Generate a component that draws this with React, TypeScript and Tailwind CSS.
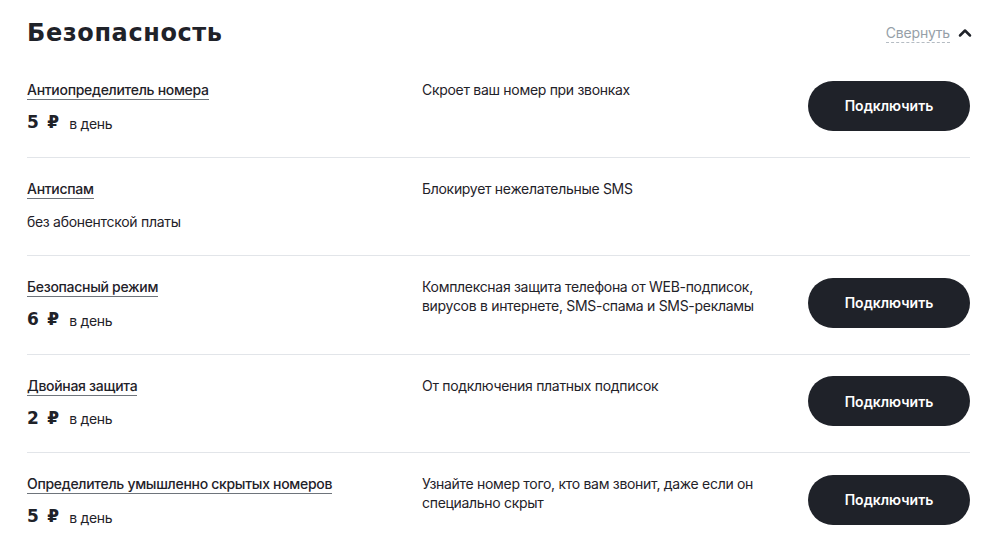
import { ChevronUp } from 'lucide-react'

const items = [
  { name: 'Антиопределитель номера', price: '5', desc: ['Скроет ваш номер при звонках'], button: true },
  { name: 'Антиспам', price: null, desc: ['Блокирует нежелательные SMS'], button: false },
  {
    name: 'Безопасный режим',
    price: '6',
    desc: ['Комплексная защита телефона от WEB-подписок,', 'вирусов в интернете, SMS-спама и SMS-рекламы'],
    button: true
  },
  { name: 'Двойная защита', price: '2', desc: ['От подключения платных подписок'], button: true },
  {
    name: 'Определитель умышленно скрытых номеров',
    price: '5',
    desc: ['Узнайте номер того, кто вам звонит, даже если он', 'специально скрыт'],
    button: true
  }
]

export default function App() {
  return (
    <div className="min-h-screen bg-white text-[#1f2229]" style={{ fontFamily: 'Inter, "Noto Sans", sans-serif' }}>
      <div className="pl-[27px] pr-[30px]">
        {/* Header */}
        <div className="flex items-center justify-between h-[59px] pt-[7px]">
          <h1
            className="text-[24px] font-bold tracking-[0.6px] leading-[28px]"
            style={{ fontFamily: '"DejaVu Sans", sans-serif' }}
          >
            Безопасность
          </h1>
          <button className="flex items-center gap-[5px] -mr-[5px] text-[14px] text-[#969fa8] tracking-[-0.2px]">
            <span className="border-b border-dashed border-[#b5bcc3] leading-[18px]">Свернуть</span>
            <ChevronUp size={20} strokeWidth={3} className="text-[#1f2229]" />
          </button>
        </div>

        {/* Rows */}
        {items.map((item, i) => (
          <div
            key={item.name}
            className={`flex items-center pt-[20px] pb-[21.5px] ${i < items.length - 1 ? 'border-b border-[#e2e5e9]' : ''}`}
          >
            <div className="w-[395px] flex flex-col">
              <div className="leading-[20px] h-[20px]">
                <span className="text-[14px] font-medium tracking-[-0.3px] border-b-[1.5px] border-[#6e747b] pb-[1px]">
                  {item.name}
                </span>
              </div>
              <div className="flex items-center h-[24px] mt-[12px]">
                {item.price ? (
                  <>
                    <span
                      className="text-[17px] font-bold tracking-[1.2px]"
                      style={{ fontFamily: '"DejaVu Sans", sans-serif' }}
                    >
                      {item.price} ₽
                    </span>
                    <span className="text-[14px] ml-[9px] tracking-[-0.3px]">в день</span>
                  </>
                ) : (
                  <span className="text-[14px] tracking-[-0.3px]">без абонентской платы</span>
                )}
              </div>
            </div>
            <div className="flex-1 self-start mt-[1px] text-[14px] leading-[19px] tracking-[-0.3px]">
              {item.desc.map((d) => (
                <div key={d}>{d}</div>
              ))}
            </div>
            <div className="w-[162px] flex justify-end -mt-[3px]">
              {item.button && (
                <button className="w-[162px] h-[50px] rounded-full bg-[#1f2229] text-white text-[14px] font-semibold">
                  Подключить
                </button>
              )}
            </div>
          </div>
        ))}
      </div>
    </div>
  )
}
